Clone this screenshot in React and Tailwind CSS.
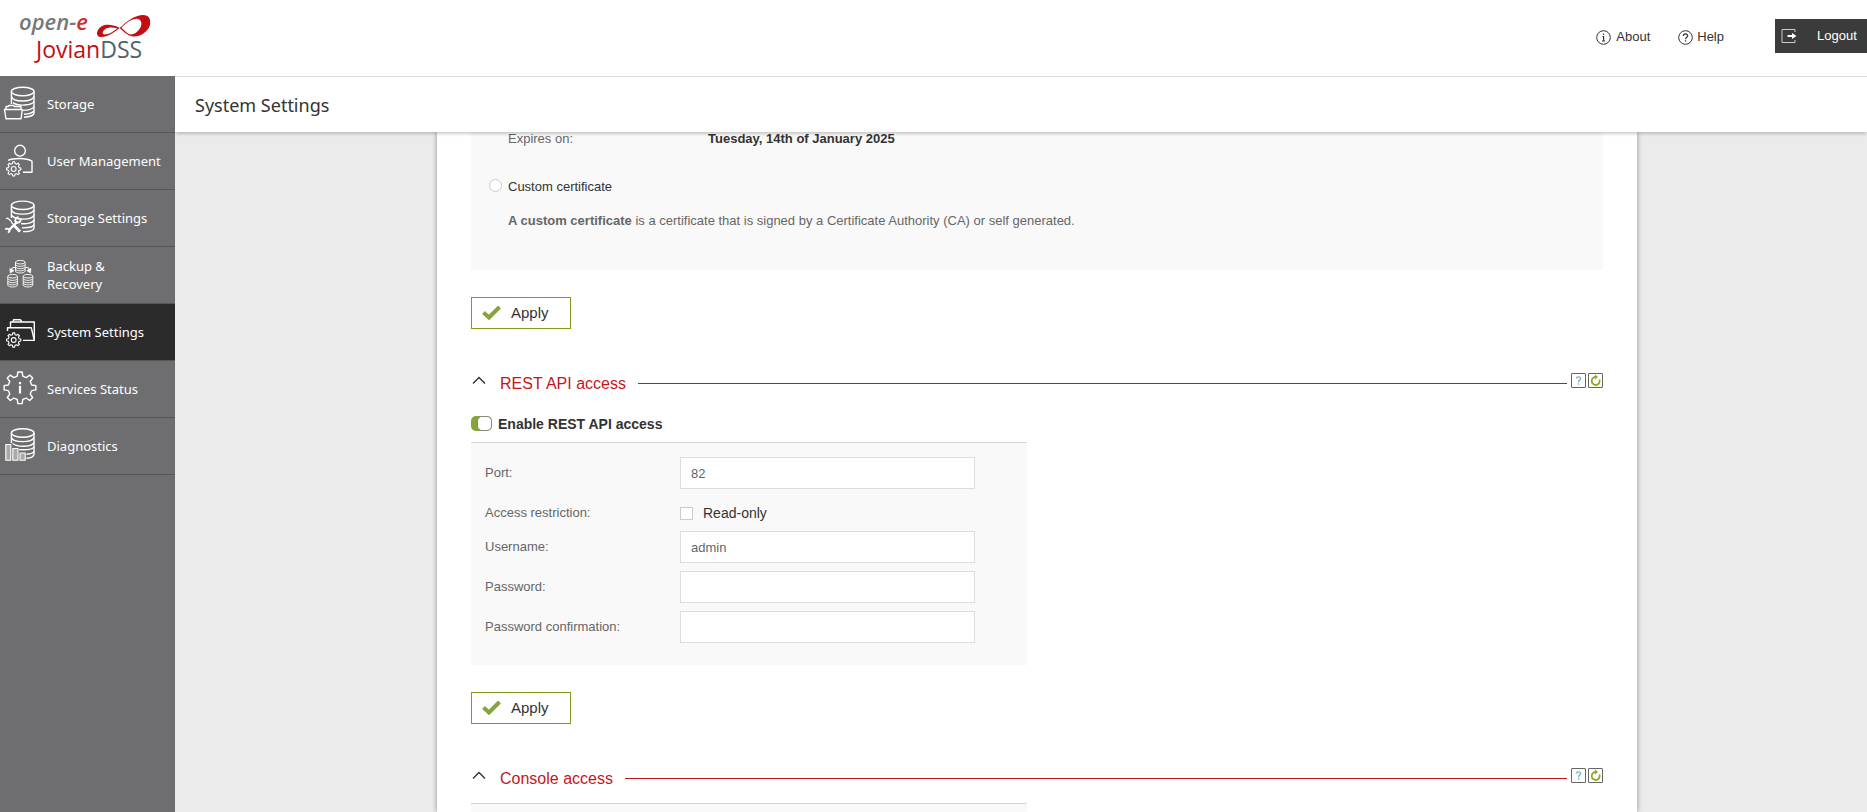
import { useState } from "react"

const gearPath = (cx, cy, outer, inner, teeth) => {
    const step = (Math.PI * 2) / teeth
    const points = []
    for (let i = 0; i < teeth; i++) {
        const a = i * step - Math.PI / 2
        const corners = [[-0.3, inner], [-0.17, outer], [0.17, outer], [0.3, inner]]
        corners.forEach(([t, r]) => {
            const x = cx + r * Math.cos(a + t * step)
            const y = cy + r * Math.sin(a + t * step)
            points.push(`${x.toFixed(2)} ${y.toFixed(2)}`)
        })
    }
    return `M${points.join('L')}Z`
}

function MenuIcon({ children }) {
    return (
        <svg width="40" height="40" viewBox="0 0 40 40" fill="none" stroke="#fff" strokeWidth="1.4" strokeLinejoin="round" className="shrink-0" aria-hidden="true">
            {children}
        </svg>
    )
}

function StorageIcon() {
    return (
        <MenuIcon>
            <ellipse cx="22.7" cy="7.5" rx="11.3" ry="4.2" />
            <path d="M11.4 7.5V20M34 7.5V29C34 31.5 29 33 24 33.2" />
            <path d="M11.4 12.5C13 18.5 32 18.5 34 12.5M13 18.6C18 22.5 32 21.5 34 17.5M23 26.4C29 26.2 33 24.8 34 22.5M24 30.2C30 30 33.5 28 34 26.5" />
            <path d="M6 25V22.5H8L9 21.5H13.5L14.5 22.5H21V25M4.5 25.5H22.3L21 34.8H6Z" />
        </MenuIcon>
    )
}

function UserIcon() {
    return (
        <MenuIcon>
            <circle cx="20" cy="9.7" r="5.4" />
            <path d="M8 19.3C13 17 26 16.5 32 20V31.3H23" />
            <path strokeWidth="1.1" d={gearPath(13.7, 27.9, 7.2, 5.5, 8)} />
            <circle cx="13.7" cy="27.9" r="2.4" strokeWidth="1.1" />
        </MenuIcon>
    )
}

function ToolsIcon() {
    return (
        <MenuIcon>
            <ellipse cx="22.7" cy="7.3" rx="11.3" ry="4.2" />
            <path d="M11.4 7.3V20M34 7.3V30C34 32.5 29 33.8 23 33.6" />
            <path d="M11.4 12C13 17.5 32 17.5 34 12M11.4 17C15 22.5 32 22.5 34 17M21 25.5C27 26.2 33 24.8 34 22M22 29.8C29 30 33.5 28.5 34 26.5" />
            <path strokeWidth="1.2" d="M6 21L7.5 20L11 23L12 25L20 33.5" />
            <path strokeWidth="3" d="M13.5 27L20 33.5" />
            <path strokeWidth="2.4" d="M8.5 32.5L17.5 23.5" />
            <path strokeWidth="1.8" d="M18.6 19.2C15.6 19.2 14.6 22 15.8 24C17.6 25.6 20.6 24.4 20.8 21.5M5.2 31.5C6.8 29.8 9.8 31 9.6 33.2L8 34.6" />
        </MenuIcon>
    )
}

function MiniDisk({ x, y }) {
    return (
        <g strokeWidth="0.9">
            <ellipse cx={x} cy={y + 2} rx="4.8" ry="1.8" />
            <path d={`M${x - 4.8} ${y + 2}V${y + 11}C${x - 4} ${y + 13.4} ${x + 4} ${y + 13.4} ${x + 4.8} ${y + 11}V${y + 2}`} />
            <path d={`M${x - 4.8} ${y + 4.5}c1 2.2 8.6 2.2 9.6 0M${x - 4.8} ${y + 6.8}c1 2.2 8.6 2.2 9.6 0M${x - 4.8} ${y + 9}c1 2.2 8.6 2.2 9.6 0`} />
        </g>
    )
}

function BackupIcon() {
    return (
        <MenuIcon>
            <MiniDisk x={20.3} y={5.2} />
            <MiniDisk x={12.6} y={19.2} />
            <MiniDisk x={28} y={19.2} />
            <path strokeWidth="1.1" d="M15 12.5H13.5C12.2 12.7 11.5 14 11.5 15M25.5 12.5H27.2C28.5 12.7 29.3 14 29.3 15" />
            <path fill="#fff" strokeWidth="0.6" d="M9.8 13.5L10.3 18L14 15.7ZM31 13.5L30.5 18L26.8 15.7Z" />
        </MenuIcon>
    )
}

function SystemIcon() {
    return (
        <MenuIcon>
            <path d="M10.5 15.3V10H13L13.5 7.8H20.5L22 10H34.3V27.5M13 10H22" />
            <path d="M7.5 19V15.8H31.3L34.3 28.4H23" />
            <path strokeWidth="1.1" d={gearPath(13.7, 28, 7.2, 5.5, 8)} />
            <circle cx="13.7" cy="28" r="2.4" strokeWidth="1.1" />
        </MenuIcon>
    )
}

function ServicesIcon() {
    return (
        <MenuIcon>
            <path d={gearPath(20, 18.8, 16, 12, 8)} />
            <path strokeWidth="2.2" d="M20 13V15.2M20 16.8V24.5" />
        </MenuIcon>
    )
}

function DiagnosticsIcon() {
    return (
        <MenuIcon>
            <ellipse cx="22.7" cy="7" rx="11.3" ry="4.2" />
            <path d="M11.4 7V17M34 7V28C34 31 30 32 26.5 32.3" />
            <path d="M11.4 11.5C13 17 32 17 34 11.5M12.5 17.5C18 21.5 32 21 34 16.5M19 23.6C27 24 33 23.5 34 21M26.5 28.2C31 27.8 33.5 26.8 34 25.5" />
            <path strokeWidth="1.1" fill="#a9a9aa" d="M5.8 18.5H10.8V34.3H5.8ZM12.8 22.5H18V34.3H12.8ZM20 27H25.2V34.3H20Z" />
        </MenuIcon>
    )
}

const menu = [
    { label: 'Storage', icon: StorageIcon },
    { label: 'User Management', icon: UserIcon },
    { label: 'Storage Settings', icon: ToolsIcon },
    { label: 'Backup & Recovery', icon: BackupIcon, wrap: true },
    { label: 'System Settings', icon: SystemIcon, active: true },
    { label: 'Services Status', icon: ServicesIcon },
    { label: 'Diagnostics', icon: DiagnosticsIcon },
]

function Logo() {
    return (
        <svg width="160" height="76" viewBox="0 0 160 76" role="img" aria-label="open-e JovianDSS">
            <text x="19" y="30" fontSize="22" fontStyle="italic" fontWeight="600" fill="#77787b" fontFamily="'Open Sans', 'Noto Sans', sans-serif">
                open-<tspan fill="#cf2e2e">e</tspan>
            </text>
            <path
                fill="#c20e12"
                fillRule="evenodd"
                d="M119 27.500C112 24 106 24 102 26C97 29 96 34 98 36C100 38 106 37 111 34C115 32 118 29 122 26C128 20 136 15 143 15C149 15 151 19 150 25C148 32 140 37 133 36.500C128 36 123 31 119 27.500ZM117.500 28.500C112 27 108 27.500 105.500 29C102 31.500 102 34 104.500 34.500C109 34.500 113 31.500 117.500 28.500ZM121.500 27.800C127 22 133 18 138 19C142 20 142.500 25 139.500 29C136.500 33 132.500 35.500 129 34C126 32.500 124 30 121.500 27.800Z"
            />
            <text x="36" y="58" fontSize="23" fill="#c20e12" fontFamily="'Open Sans', 'Noto Sans', sans-serif">
                Jovian<tspan fill="#4d6470">DSS</tspan>
            </text>
        </svg>
    )
}

function ApplyButton() {
    return (
        <button type="button" className="mt-[27px] flex h-8 w-[100px] items-center border border-[#7f9c1f] bg-white pl-2.5 text-[15px] text-[#333]">
            <svg width="20" height="16" viewBox="0 0 20 16" className="mr-[9px]" fill="none" stroke="#87a43b" strokeWidth="4" aria-hidden="true">
                <path d="M1.500 7.500L7 12.500L17.500 2" />
            </svg>
            Apply
        </button>
    )
}

function SectionHeading({ title }) {
    return (
        <div className="mt-[41px] flex h-[27px] items-center">
            <button type="button" aria-label={`Collapse ${title}`} className="mb-1 w-[29px]">
                <svg width="16" height="12" viewBox="0 0 16 12" fill="none" stroke="#333" strokeWidth="1.4" aria-hidden="true">
                    <path d="M2 7.500L8 1.500L14 7.500" />
                </svg>
            </button>
            <h2 className="text-base text-[#c4161c]">{title}</h2>
            <div className="ml-3 mr-1 h-px flex-1 bg-[#c4161c]" />
            <div className="mb-1.5 flex gap-0.5">
                <button type="button" aria-label="Section help" className="size-[15px] rounded-[1px] border border-[#666] bg-white">
                    <svg width="13" height="13" viewBox="0 0 13 13" fill="none" stroke="#6fb3cf" strokeWidth="1.4" aria-hidden="true">
                        <path d="M4.500 4.500C4.500 2.500 8.500 2.300 8.500 4.500C8.500 6 6.600 6.200 6.600 8.200M6.600 9.300V10.700" />
                    </svg>
                </button>
                <button type="button" aria-label="Reload section" className="size-[15px] rounded-[1px] border border-[#666] bg-white">
                    <svg width="13" height="13" viewBox="0 0 13 13" fill="none" stroke="#93a81c" strokeWidth="1.8" aria-hidden="true">
                        <path d="M10.400 5.500A4 4 0 1 1 6.500 3" />
                        <path d="M6 0.500L9 3L6 5.500Z" fill="#93a81c" stroke="none" />
                    </svg>
                </button>
            </div>
        </div>
    )
}

function Field({ id, label, type = 'text', value, onChange }) {
    return (
        <div className="mb-2 flex items-center">
            <label htmlFor={id} className="w-[195px] text-[13px] text-[#666]">{label}</label>
            <input
                id={id}
                type={type}
                value={value}
                onChange={e => onChange(e.target.value)}
                className="h-8 w-[295px] border border-[#ddd] bg-white px-2.5 text-[13px] text-[#666] focus:outline-none"
            />
        </div>
    )
}

function App() {
    const [custom, setCustom] = useState(false)
    const [enabled, setEnabled] = useState(true)
    const [readOnly, setReadOnly] = useState(false)
    const [port, setPort] = useState('82')
    const [username, setUsername] = useState('admin')
    const [password, setPassword] = useState('')
    const [confirmation, setConfirmation] = useState('')

    return (
        <div className="flex h-screen flex-col bg-white font-['Liberation_Sans',Arial,sans-serif] text-[#333]">
            <header className="flex h-[76px] shrink-0 justify-between">
                <Logo />
                <div className="flex items-center pb-1 text-[13px]">
                    <a href="#about" className="flex items-center gap-[5px] pt-0.5">
                        <svg width="15" height="15" viewBox="0 0 15 15" fill="none" stroke="#333" aria-hidden="true">
                            <circle cx="7.500" cy="7.500" r="6.800" />
                            <path strokeWidth="1.200" d="M7.500 3.800V5M6.500 6.500H7.600V11M6 11H9" />
                        </svg>
                        About
                    </a>
                    <a href="#help" className="ml-7 flex items-center gap-1 pt-0.5">
                        <svg width="15" height="15" viewBox="0 0 15 15" fill="none" stroke="#333" aria-hidden="true">
                            <circle cx="7.500" cy="7.500" r="6.800" />
                            <path strokeWidth="1.200" d="M5.300 6C5.300 3.300 9.700 3.300 9.700 5.800C9.700 7.300 7.500 7.400 7.500 9.200M7.500 10.300V11.500" />
                        </svg>
                        Help
                    </a>
                    <button type="button" className="ml-[51px] flex h-[34px] w-[92px] items-center bg-[#3b3b3b] pl-1.5 text-white">
                        <svg width="16" height="16" viewBox="0 0 16 16" fill="none" stroke="#ccc" className="mr-5" aria-hidden="true">
                            <path d="M14 4V1.500H1V14.500H14V12" />
                            <path fill="#fff" stroke="none" d="M6.500 7H11V5L15.500 8L11 11V9H6.500Z" />
                        </svg>
                        Logout
                    </button>
                </div>
            </header>

            <div className="flex min-h-0 flex-1">
                <nav className="w-[175px] shrink-0 bg-[#6e6e70] font-['Noto_Sans','Open_Sans',sans-serif] text-[13px] leading-[18px] text-white">
                    {menu.map(({ label, icon: Icon, active, wrap }) => (
                        <a
                            key={label}
                            href="#menu"
                            className={`flex h-[57px] items-center gap-[7px] border-b border-[#555557] ${active ? 'bg-[#2b2b2b]' : ''}`}
                        >
                            <Icon />
                            <span className={wrap ? 'w-20' : ''}>{label}</span>
                        </a>
                    ))}
                </nav>

                <div className="flex min-w-0 flex-1 flex-col">
                    <div className="relative z-10 flex h-14 shrink-0 items-center border-t border-[#ddd] bg-white pl-5 shadow-[0_3px_3px_-1px_rgba(0,0,0,0.2)]">
                        <h1 className="font-['Noto_Sans','Open_Sans',sans-serif] text-lg">System Settings</h1>
                    </div>

                    <main className="min-h-0 flex-1 overflow-hidden bg-[#ebebeb] pl-8">
                        <div className="mx-auto flex h-full max-w-[1200px] flex-col bg-white px-[34px] shadow-[0_0_5px_rgba(0,0,0,0.4)]">
                            <div className="h-[138px] shrink-0 bg-[#f9f9f9] pl-[18px] pt-px text-[13px]">
                                <div className="flex pl-[19px] leading-3">
                                    <span className="w-[200px] text-[#666]">Expires on:</span>
                                    <b>Tuesday, 14th of January 2025</b>
                                </div>
                                <label className="mt-8 flex items-center gap-1.5 leading-5">
                                    <input
                                        type="radio"
                                        checked={custom}
                                        onChange={() => setCustom(true)}
                                        className="mb-1 size-[13px] appearance-none rounded-full border border-[#ccc] bg-white checked:border-4 checked:border-[#87a43b]"
                                    />
                                    Custom certificate
                                </label>
                                <p className="mt-3.5 pl-[19px] leading-5 text-[#666]">
                                    <b>A custom certificate</b> is a certificate that is signed by a Certificate Authority (CA) or self generated.
                                </p>
                            </div>
                            <div className="shrink-0">
                                <ApplyButton />
                            </div>

                            <section className="shrink-0">
                                <SectionHeading title="REST API access" />
                                <label className="mt-[17px] flex h-5 items-center gap-1.5 text-sm font-bold">
                                    <input
                                        type="checkbox"
                                        checked={enabled}
                                        onChange={e => setEnabled(e.target.checked)}
                                        className="mb-0.5 flex h-[15px] w-[21px] appearance-none rounded-[5px] bg-[#aaa] before:h-[15px] before:w-[15px] before:rounded-[5px] before:border before:border-[#888] before:bg-white checked:justify-end checked:bg-[#87a43b]"
                                    />
                                    Enable REST API access
                                </label>
                                <div className="mt-2 w-[556px] border-t border-[#d5d5d5] bg-[#f9f9f9] pb-3.5 pl-3.5 pt-3.5">
                                    <Field id="port" label="Port:" value={port} onChange={setPort} />
                                    <div className="mb-0.5 flex h-8 items-center">
                                        <span className="w-[195px] text-[13px] text-[#666]">Access restriction:</span>
                                        <label className="flex items-center gap-2.5 text-sm">
                                            <input
                                                type="checkbox"
                                                checked={readOnly}
                                                onChange={e => setReadOnly(e.target.checked)}
                                                className="size-[13px] appearance-none border border-[#ccc] bg-white checked:bg-[#87a43b]"
                                            />
                                            Read-only
                                        </label>
                                    </div>
                                    <Field id="username" label="Username:" value={username} onChange={setUsername} />
                                    <Field id="password" label="Password:" type="password" value={password} onChange={setPassword} />
                                    <Field id="confirmation" label="Password confirmation:" type="password" value={confirmation} onChange={setConfirmation} />
                                </div>
                                <ApplyButton />
                            </section>

                            <section className="flex min-h-0 flex-1 flex-col">
                                <SectionHeading title="Console access" />
                                <div className="mt-[11px] w-[556px] flex-1 border-t border-[#d5d5d5] bg-[#f9f9f9]" />
                            </section>
                        </div>
                    </main>
                </div>
            </div>
        </div>
    )
}

export default App
